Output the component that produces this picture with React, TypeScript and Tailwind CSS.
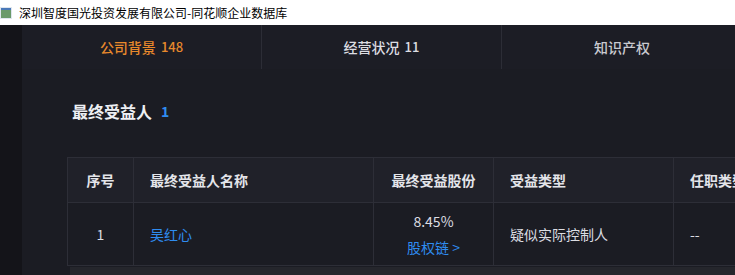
import React from "react";

const font = { fontFamily: '"Microsoft YaHei", "Noto Sans CJK SC", "Noto Sans", sans-serif' };

function Cell({ children, className = "" }: { children?: React.ReactNode; className?: string }) {
  return (
    <div className={`border-r border-b border-[#2d2e37] flex items-center ${className}`}>{children}</div>
  );
}

export default function App() {
  return (
    <div className="w-[735px] h-[275px] overflow-hidden bg-[#1c1d24]" style={font}>
      <div className="h-[25px] bg-white flex items-center">
        <svg width="14" height="12" viewBox="0 0 14 12" className="mr-[5px]">
          <rect x="0" y="0" width="12" height="12" fill="#dfe6ee" />
          <rect x="1" y="3" width="10" height="8" fill="#6a9a6a" />
          <rect x="1" y="1" width="10" height="2" fill="#4a79b8" />
        </svg>
        <span className="text-[12px] text-black leading-none">深圳智度国光投资发展有限公司-同花顺企业数据库</span>
      </div>
      <div className="flex h-[250px]">
        <div className="w-[22px] bg-[#141419] shrink-0" />
        <div className="flex-1 min-w-0 bg-[#1c1d24] overflow-hidden">
          <div className="h-[44px] flex bg-[#1c1d25]">
            <div className="w-[240px] shrink-0 border-r border-[#2c2d36] flex items-center justify-center text-[14px] font-medium text-[#e8892c]">
              公司背景<span className="ml-[5px] text-[13px]">148</span>
            </div>
            <div className="w-[240px] shrink-0 border-r border-[#2c2d36] flex items-center justify-center text-[14px] font-medium text-[#dcdde2]">
              经营状况<span className="ml-[5px] text-[13px]">11</span>
            </div>
            <div className="w-[240px] shrink-0 flex items-center justify-center text-[14px] font-medium text-[#c9cad0]">知识产权</div>
          </div>
          <div className="bg-[#1b1c23] h-[206px] pl-[45px]">
            <div className="pt-[30px] pl-[5px] h-[54px] flex items-center">
              <span className="text-[16px] font-bold text-[#eef0f4] leading-[24px]">最终受益人</span>
              <span className="ml-[9px] text-[14px] font-bold text-[#2f8cf0]">1</span>
            </div>
            <div className="mt-[34px] w-[800px] grid grid-cols-[66px_240px_120px_180px_194px] border-l border-t border-[#2d2e37] text-[14px]">
              <Cell className="h-[45px] bg-[#202129] justify-center font-bold text-[#e4e5ea]">序号</Cell>
              <Cell className="h-[45px] bg-[#202129] pl-[16px] font-bold text-[#e4e5ea]">最终受益人名称</Cell>
              <Cell className="h-[45px] bg-[#202129] justify-center font-bold text-[#e4e5ea]">最终受益股份</Cell>
              <Cell className="h-[45px] bg-[#202129] pl-[16px] font-bold text-[#e4e5ea]">受益类型</Cell>
              <Cell className="h-[45px] bg-[#202129] pl-[16px] font-bold text-[#e4e5ea]">任职类型</Cell>

              <Cell className="h-[63px] justify-center text-[#dcdde2]">1</Cell>
              <Cell className="h-[63px] pl-[16px] text-[#2f8cf0]">吴红心</Cell>
              <Cell className="h-[63px] flex-col justify-center text-[#dcdde2]">
                <span className="leading-[20px]">8.45%</span>
                <span className="leading-[20px] mt-[6px] text-[#2f8cf0]">股权链 &gt;</span>
              </Cell>
              <Cell className="h-[63px] pl-[16px] text-[#dcdde2]">疑似实际控制人</Cell>
              <Cell className="h-[63px] pl-[16px] text-[#dcdde2]">--</Cell>
            </div>
            <div className="mt-[1px] ml-[3px] h-[12px] bg-[#25262c]" />
          </div>
        </div>
      </div>
    </div>
  );
}
